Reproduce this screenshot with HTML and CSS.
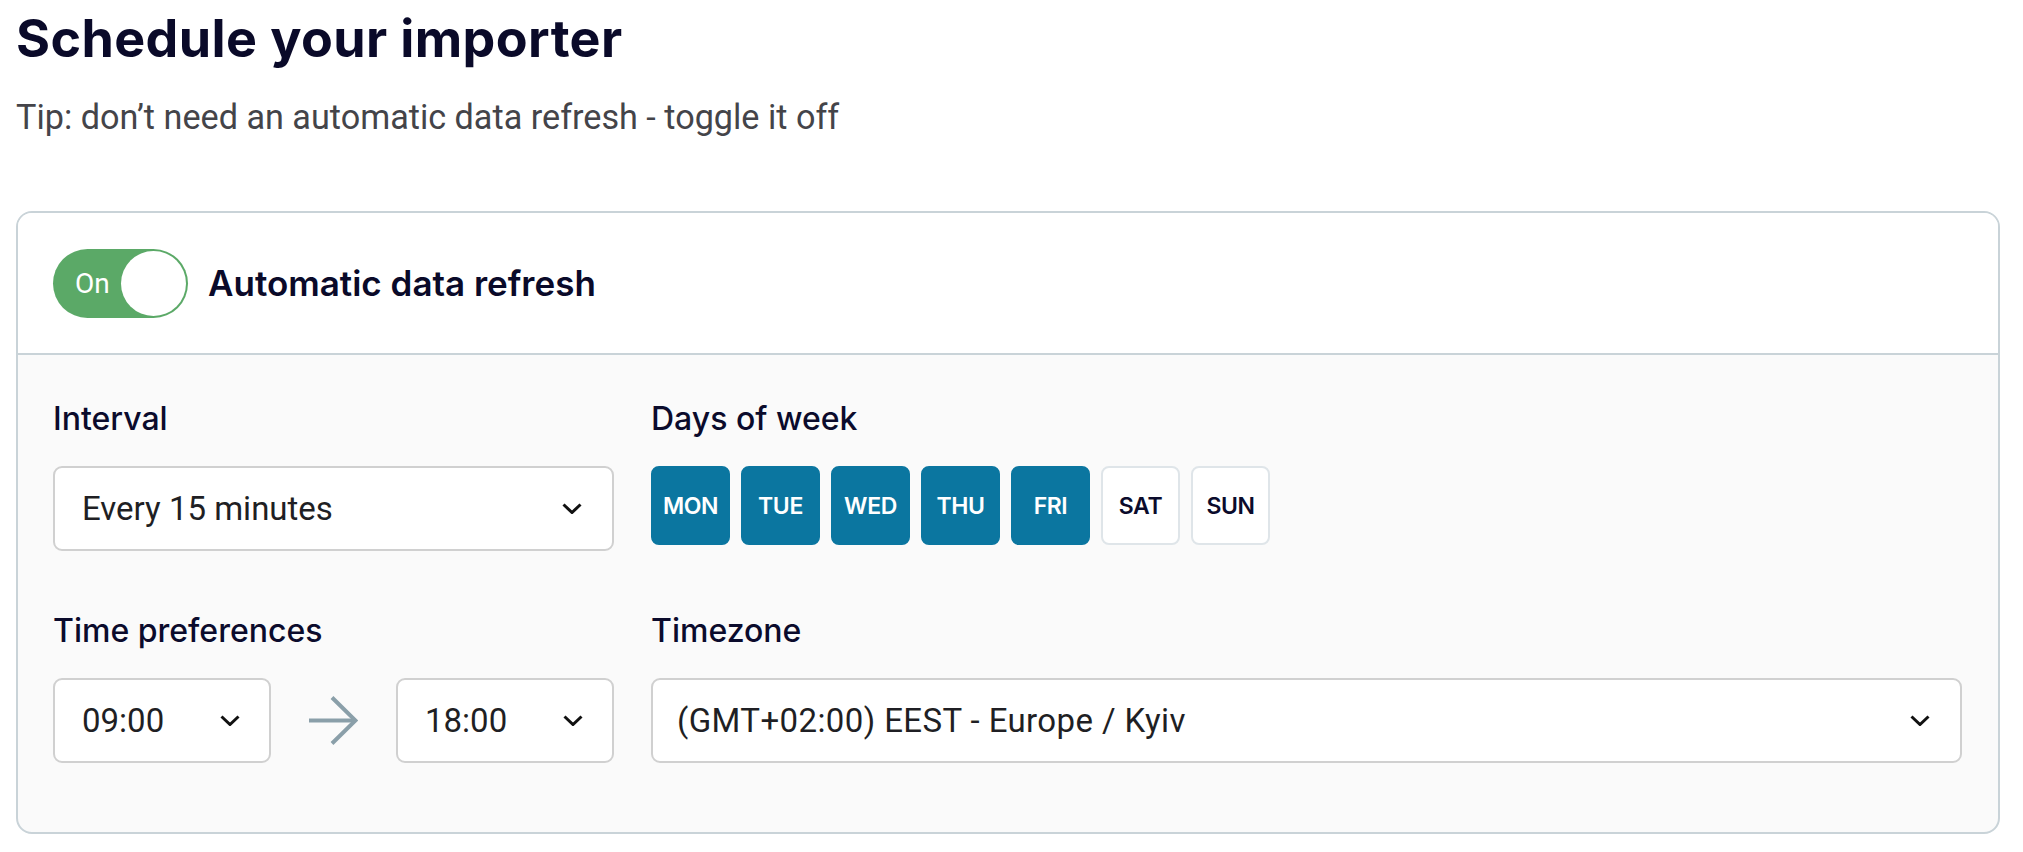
FILE: index.html
```html
<!DOCTYPE html>
<html lang="en">
<head>
<meta charset="utf-8">
<title>Schedule your importer</title>
<link rel="stylesheet" href="styles.css">
</head>
<body>
<main class="page">
  <h1 class="title">Schedule your importer</h1>
  <p class="tip">Tip: don’t need an automatic data refresh - toggle it off</p>

  <section class="card">
    <header class="card-head">
      <div class="toggle">
        <span class="toggle-label">On</span>
        <span class="toggle-knob"></span>
      </div>
      <h2 class="card-title">Automatic data refresh</h2>
    </header>

    <div class="card-body">
      <div class="field">
        <div class="label">Interval</div>
        <div class="select">
          <span class="select-value">Every 15 minutes</span>
          <svg class="chev" viewBox="0 0 20 11" width="20" height="11"><polyline points="1.5,1.5 10,9.5 18.5,1.5"/></svg>
        </div>
      </div>

      <div class="field">
        <div class="label">Days of week</div>
        <div class="days">
          <span class="day on">MON</span>
          <span class="day on">TUE</span>
          <span class="day on">WED</span>
          <span class="day on">THU</span>
          <span class="day on">FRI</span>
          <span class="day">SAT</span>
          <span class="day">SUN</span>
        </div>
      </div>

      <div class="field">
        <div class="label">Time preferences</div>
        <div class="time-row">
          <div class="select time">
            <span class="select-value">09:00</span>
            <svg class="chev" viewBox="0 0 20 11" width="20" height="11"><polyline points="1.5,1.5 10,9.5 18.5,1.5"/></svg>
          </div>
          <svg class="arrow" viewBox="0 0 49 49" width="49" height="49"><line x1="0" y1="24.5" x2="47" y2="24.5"/><polyline points="23,1.5 46.5,24.5 23,47.5"/></svg>
          <div class="select time">
            <span class="select-value">18:00</span>
            <svg class="chev" viewBox="0 0 20 11" width="20" height="11"><polyline points="1.5,1.5 10,9.5 18.5,1.5"/></svg>
          </div>
        </div>
      </div>

      <div class="field">
        <div class="label">Timezone</div>
        <div class="select tz">
          <span class="select-value">(GMT+02:00) EEST - Europe / Kyiv</span>
          <svg class="chev" viewBox="0 0 20 11" width="20" height="11"><polyline points="1.5,1.5 10,9.5 18.5,1.5"/></svg>
        </div>
      </div>
    </div>
  </section>
</main>
</body>
</html>
```

FILE: styles.css
```css
* { box-sizing: border-box; }

html, body {
  margin: 0;
  padding: 0;
  background: #ffffff;
}

body {
  font-family: "Inter", "Roboto", "Liberation Sans", sans-serif;
  color: #0b0b2c;
}

.page {
  padding: 7px 23px 0 16px;
}

.title {
  margin: 0;
  font-size: 52px;
  line-height: 64px;
  font-weight: 700;
  letter-spacing: 0.4px;
  color: #0a0a29;
}

.tip {
  margin: 26px 0 0 0;
  font-family: "Roboto", "Inter", sans-serif;
  font-size: 34.2px;
  line-height: 40px;
  font-weight: 400;
  color: #444449;
}

.card {
  margin-top: 74px;
  border: 2px solid #c9d3d8;
  border-radius: 16px;
  overflow: hidden;
  background: #fafafa;
}

.card-head {
  height: 142px;
  display: flex;
  align-items: center;
  gap: 20px;
  padding: 0 0 0 35px;
  background: #ffffff;
  border-bottom: 2px solid #c9d3d8;
}

.toggle {
  width: 135px;
  height: 69px;
  border-radius: 35px;
  background: #5ba967;
  display: flex;
  align-items: center;
  justify-content: space-between;
  padding: 0 2px 0 22px;
}

.toggle-label {
  font-family: "Roboto", "Inter", sans-serif;
  font-size: 28px;
  font-weight: 400;
  color: #ffffff;
}

.toggle-knob {
  width: 65px;
  height: 65px;
  border-radius: 50%;
  background: #ffffff;
}

.card-title {
  margin: 0;
  font-size: 35px;
  font-weight: 600;
  letter-spacing: 0;
  color: #0a0a29;
}

.card-body {
  display: grid;
  grid-template-columns: 561px 1fr;
  column-gap: 37px;
  row-gap: 60px;
  padding: 44px 36px 69px 35px;
}

.label {
  font-size: 32px;
  line-height: 40px;
  font-weight: 500;
  color: #0b0b2c;
  margin-bottom: 27px;
}

.select {
  height: 85px;
  border: 2px solid #d0d0d0;
  border-radius: 9px;
  background: #ffffff;
  display: flex;
  align-items: center;
  justify-content: space-between;
  padding: 0 30px 0 27px;
}

.select-value {
  font-family: "Roboto", "Inter", sans-serif;
  font-size: 33px;
  font-weight: 400;
  color: #1f1f24;
}

.chev {
  flex: none;
  fill: none;
  stroke: #111111;
  stroke-width: 3;
}

.time-row {
  display: flex;
  align-items: center;
  justify-content: space-between;
}

.select.time {
  width: 218px;
  padding-right: 29px;
}

.arrow {
  flex: none;
  fill: none;
  stroke: #8a9fa9;
  stroke-width: 4;
}

.select.tz {
  padding-left: 24px;
}

.tz .select-value {
  letter-spacing: 0.4px;
}

.days {
  display: flex;
  gap: 11px;
}

.day {
  width: 79px;
  height: 79px;
  border-radius: 8px;
  border: 2px solid #dfe5e9;
  background: #ffffff;
  display: flex;
  align-items: center;
  justify-content: center;
  font-size: 23px;
  font-weight: 600;
  letter-spacing: -0.4px;
  color: #0b0b2c;
}

.day.on {
  background: #0b76a0;
  border-color: #0b76a0;
  color: #ffffff;
}
```
